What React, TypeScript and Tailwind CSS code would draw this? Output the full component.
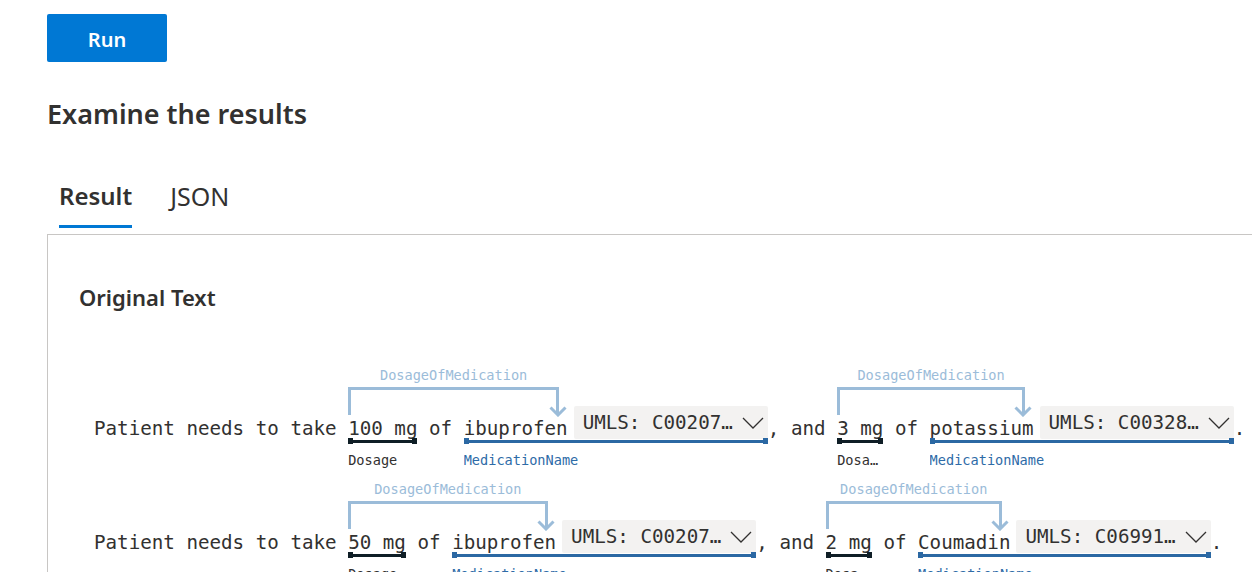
import type { ReactNode } from "react";

type Seg =
  | { kind: "text"; value: string }
  | { kind: "dose"; value: string; relTo: number }
  | { kind: "med"; value: string; code: string };

const rows: Seg[][] = [
  [
    { kind: "text", value: "Patient needs to take " },
    { kind: "dose", value: "100 mg", relTo: 8 },
    { kind: "text", value: " of " },
    { kind: "med", value: "ibuprofen", code: "UMLS: C00207…" },
    { kind: "text", value: ", and " },
    { kind: "dose", value: "3 mg", relTo: 8 },
    { kind: "text", value: " of " },
    { kind: "med", value: "potassium", code: "UMLS: C00328…" },
    { kind: "text", value: "." },
  ],
  [
    { kind: "text", value: "Patient needs to take " },
    { kind: "dose", value: "50 mg", relTo: 8 },
    { kind: "text", value: " of " },
    { kind: "med", value: "ibuprofen", code: "UMLS: C00207…" },
    { kind: "text", value: ", and " },
    { kind: "dose", value: "2 mg", relTo: 7 },
    { kind: "text", value: " of " },
    { kind: "med", value: "Coumadin", code: "UMLS: C06991…" },
    { kind: "text", value: "." },
  ],
];

function Chevron() {
  return (
    <svg width="22" height="12" viewBox="0 0 22 12" fill="none">
      <path d="M1 1L11 11L21 1" stroke="#323130" strokeWidth="1.3" />
    </svg>
  );
}

function Bar({ color }: { color: string }) {
  return (
    <div className="relative h-[3px] w-full" style={{ background: color }}>
      <div className="absolute left-0 -top-[2px] h-[6px] w-[5px]" style={{ background: color }} />
      <div className="absolute right-0 -top-[2px] h-[6px] w-[5px]" style={{ background: color }} />
    </div>
  );
}

function Label({ children, className }: { children: ReactNode; className: string }) {
  return (
    <div
      className={`mt-[9px] w-0 min-w-full overflow-hidden text-ellipsis whitespace-nowrap text-[13.6px] leading-[16px] ${className}`}
    >
      {children}
    </div>
  );
}

// bracket from the dosage to the medication word it belongs to
function Relation({ span }: { span: number }) {
  return (
    <div
      className="absolute -top-[38px] left-0 flex flex-col"
      style={{ width: `calc(${span}ch + 3px)` }}
    >
      <div className="h-[16px] text-center text-[13.6px] leading-[16px] text-[#9bbcd9]">
        DosageOfMedication
      </div>
      <div className="relative mt-[4px] h-[28px] border-l-[3px] border-r-[3px] border-t-[3px] border-[#9bbcd9]">
        <svg
          className="absolute -right-[10.5px] bottom-[-2px]"
          width="18"
          height="11"
          viewBox="0 0 18 11"
          fill="none"
        >
          <path d="M1.5 1.5L9 9L16.5 1.5" stroke="#9bbcd9" strokeWidth="3" />
        </svg>
      </div>
    </div>
  );
}

function Row({ segs }: { segs: Seg[] }) {
  return (
    <div className="flex items-start whitespace-pre pt-[38px]">
      {segs.map((s, i) => {
        if (s.kind === "text") {
          return (
            <div key={i} className="flex h-[35px] items-end">
              <span className="leading-[22px]">{s.value}</span>
            </div>
          );
        }
        if (s.kind === "dose") {
          return (
            <div key={i} className="relative flex flex-col">
              <Relation span={s.value.length + 4 + s.relTo} />
              <div className="flex h-[35px] items-end">
                <span className="leading-[22px]">{s.value}</span>
              </div>
              <Bar color="#0f1e26" />
              <Label className="text-[#323130]">Dosage</Label>
            </div>
          );
        }
        return (
          <div key={i} className="relative flex flex-col">
            <div className="flex h-[35px] items-end gap-[6px]">
              <span className="leading-[22px]">{s.value}</span>
              <div className="mb-px flex h-[33px] items-center gap-[9px] rounded-[2px] bg-[#f3f2f1] pl-[9px] pr-[4px]">
                <span className="leading-[22px]">{s.code}</span>
                <Chevron />
              </div>
            </div>
            <Bar color="#2b68a3" />
            <Label className="text-[#2e6ba7]">MedicationName</Label>
          </div>
        );
      })}
    </div>
  );
}

export default function App() {
  return (
    <div className="h-screen overflow-hidden bg-white pl-[47px] font-['Segoe_UI','Noto_Sans',sans-serif] text-[#323130]">
      <button className="mt-[14px] h-[48px] w-[120px] rounded-[2px] bg-[#0078d4] pt-[3px] text-[20px] font-semibold text-white">
        Run
      </button>

      <h2 className="mt-[34px] text-[27px] font-semibold leading-[36px]">Examine the results</h2>

      <div className="mt-[48px] flex gap-[38px] pl-[12px]">
        <div className="flex flex-col">
          <span className="text-[24px] font-semibold leading-[32px]">Result</span>
          <div className="mt-[13px] h-[3px] bg-[#0078d4]" />
        </div>
        <span className="text-[25px] leading-[32px]">JSON</span>
      </div>

      <div className="mt-[6px] h-[600px] w-[1400px] border border-[#c8c6c4] pl-[31px] pt-[47px]">
        <h3 className="text-[22px] font-semibold leading-[30px]">Original Text</h3>
        <div className="mt-[55px] flex flex-col gap-[13px] pl-[15px] font-['DejaVu_Sans_Mono',monospace] text-[19.2px]">
          {rows.map((r, i) => (
            <Row key={i} segs={r} />
          ))}
        </div>
      </div>
    </div>
  );
}
